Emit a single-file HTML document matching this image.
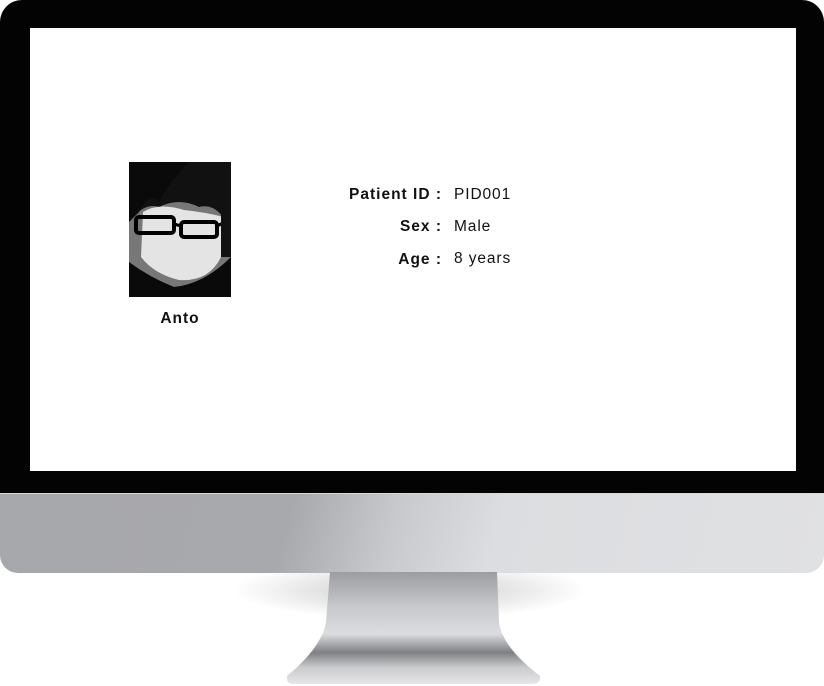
<!DOCTYPE html>
<html><head><style>
body{margin:0;width:824px;height:686px;background:#fff;position:relative;overflow:hidden;font-family:"Liberation Sans",sans-serif}
.bezel{position:absolute;left:0;top:0;width:824px;height:494px;background:#030303;border-radius:22px 22px 0 0}
.screen{position:absolute;left:30px;top:28px;width:766px;height:443px;background:#fff}
.chin{position:absolute;left:0;top:493px;width:824px;height:79px;border-radius:0 0 18px 18px;background:linear-gradient(105deg,#a7a8ab 0%,#a8a9ac 35%,#c9cacd 48%,#dcdde0 60%,#e0e1e3 100%);border-top:1px solid #d8d8da}
.shadow{position:absolute;left:230px;top:560px;width:360px;height:60px;border-radius:50%;background:radial-gradient(ellipse at center,rgba(0,0,0,.22),rgba(0,0,0,0) 70%)}
.lbl{position:absolute;font-size:15.5px;font-weight:bold;color:#111;letter-spacing:1px;text-align:right;width:250px;left:192px}
.val{position:absolute;font-size:15.5px;color:#111;left:454px;letter-spacing:.9px}
</style></head><body>
<div class="shadow"></div>
<div class="bezel"></div>
<div class="screen"></div>
<div class="chin"></div>
<svg style="position:absolute;left:0;top:572px" width="824" height="114">
<defs><linearGradient id="st" x1="0" y1="0" x2="0" y2="1">
<stop offset="0" stop-color="#9c9da0"/><stop offset=".3" stop-color="#c6c7ca"/><stop offset=".55" stop-color="#dcdde0"/><stop offset=".72" stop-color="#7f8083"/><stop offset=".85" stop-color="#c9cacc"/><stop offset="1" stop-color="#e6e6e8"/></linearGradient></defs>
<path d="M330 0 L497 0 L499 50 Q502 75 540 104 L540 108 Q538 112 532 112 L294 112 Q287 112 287 107 L287 104 Q322 75 326 50 Z" fill="url(#st)"/>
</svg>
<svg style="position:absolute;left:129px;top:162px" width="102" height="135" viewBox="0 0 102 135">
<rect width="102" height="135" fill="#777"/>
<path d="M0 0H102V70Q90 40 70 45Q50 35 30 45Q15 40 0 60Z" fill="#111"/>
<path d="M14 50Q30 40 55 48Q75 50 95 55L92 95Q80 120 50 118Q25 112 12 95Z" fill="#e4e4e4"/>
<path d="M0 0H60Q40 20 30 40Q20 30 10 50L0 60Z" fill="#0a0a0a"/>
<rect x="7" y="55" width="38" height="16" rx="3" fill="none" stroke="#000" stroke-width="4"/>
<rect x="52" y="60" width="36" height="15" rx="3" fill="none" stroke="#000" stroke-width="4"/>
<path d="M45 62L52 64M88 64L100 58" stroke="#000" stroke-width="3"/>
<path d="M0 100Q20 115 45 125Q75 122 102 95V135H0Z" fill="#0a0a0a"/>
<path d="M92 40L102 35V95L92 95Z" fill="#111"/>
</svg>
<div style="position:absolute;left:130px;top:310px;width:100px;text-align:center;font-size:15.5px;font-weight:bold;color:#111;letter-spacing:1px">Anto</div>
<div class="lbl" style="top:186px">Patient ID :</div><div class="val" style="top:186px">PID001</div>
<div class="lbl" style="top:218px">Sex :</div><div class="val" style="top:218px">Male</div>
<div class="lbl" style="top:251px">Age :</div><div class="val" style="top:250px">8 years</div>
</body></html>
